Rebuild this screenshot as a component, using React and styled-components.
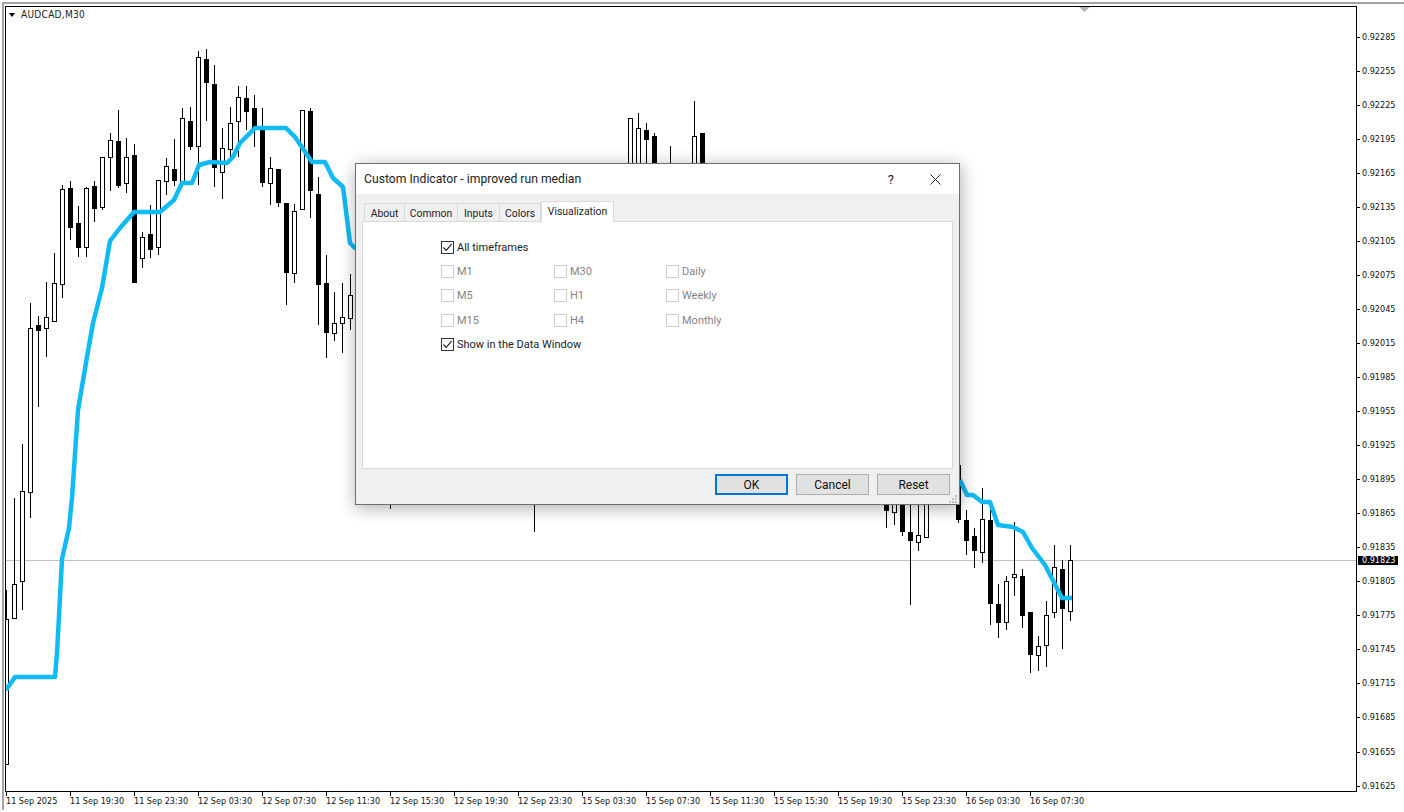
import React from 'react';
import styled, { createGlobalStyle } from 'styled-components';

const AXIS_FONT = '"DejaVu Sans Condensed", "Liberation Sans", sans-serif';
const UI_FONT = 'Roboto, "Noto Sans", "Liberation Sans", sans-serif';

// column, wick top, body top, body bottom, wick bottom, up (white body)
const CANDLES = [
  [6, 590, 619, 764, 764, 1], [14, 498, 584, 618, 618, 1], [22, 444, 491, 581, 610, 1],
  [30, 303, 328, 492, 518, 1], [38, 316, 325, 331, 407, 0], [46, 282, 317, 328, 357, 1],
  [54, 253, 283, 321, 322, 1], [62, 185, 189, 284, 298, 1], [70, 181, 188, 228, 240, 0],
  [78, 206, 223, 248, 257, 0], [86, 187, 188, 247, 257, 1], [94, 181, 186, 209, 222, 0],
  [102, 157, 157, 207, 210, 1], [110, 133, 140, 157, 191, 1], [118, 110, 141, 186, 188, 0],
  [126, 138, 157, 183, 193, 1], [134, 144, 155, 283, 283, 0], [142, 232, 237, 258, 268, 1],
  [150, 205, 234, 250, 258, 0], [158, 180, 180, 247, 255, 1], [166, 158, 166, 181, 195, 1],
  [174, 139, 169, 181, 186, 0], [182, 108, 118, 182, 187, 1], [190, 107, 121, 147, 150, 0],
  [198, 51, 57, 146, 185, 1], [206, 49, 59, 83, 121, 0], [214, 65, 84, 168, 187, 0],
  [222, 128, 148, 172, 199, 1], [230, 107, 123, 149, 158, 1], [238, 86, 97, 121, 157, 1],
  [246, 86, 98, 112, 130, 0], [254, 95, 108, 130, 147, 0], [262, 108, 128, 183, 187, 0],
  [270, 157, 168, 183, 205, 1], [278, 169, 169, 203, 207, 0], [286, 203, 203, 273, 305, 0],
  [294, 204, 211, 273, 283, 1], [302, 110, 110, 209, 209, 1], [310, 108, 111, 191, 218, 0],
  [318, 177, 194, 285, 325, 0], [326, 255, 283, 333, 358, 0], [334, 292, 323, 333, 341, 1],
  [342, 283, 317, 323, 353, 1], [350, 274, 295, 318, 330, 1],
  [390, 480, 490, 495, 509, 1], [534, 480, 490, 495, 532, 1],
  [630, 118, 118, 200, 200, 1], [638, 113, 128, 200, 200, 1], [646, 123, 130, 140, 200, 0],
  [654, 133, 136, 200, 200, 0], [670, 146, 170, 200, 200, 1], [694, 101, 136, 200, 200, 1],
  [702, 133, 133, 200, 200, 0],
  [886, 480, 490, 511, 528, 0], [894, 480, 490, 512, 525, 1], [902, 480, 490, 532, 536, 0],
  [910, 500, 532, 541, 605, 0], [918, 500, 535, 542, 551, 1], [926, 480, 490, 537, 537, 1],
  [958, 465, 465, 520, 523, 0], [966, 510, 520, 541, 555, 0], [974, 528, 536, 551, 568, 0],
  [982, 488, 519, 552, 563, 1], [990, 502, 520, 604, 625, 0], [998, 584, 604, 623, 638, 0],
  [1006, 576, 581, 622, 630, 1], [1014, 522, 574, 577, 596, 1], [1022, 569, 576, 616, 628, 0],
  [1030, 612, 612, 655, 673, 0], [1038, 636, 646, 655, 671, 1], [1046, 601, 615, 645, 667, 1],
  [1054, 545, 567, 612, 618, 1], [1062, 560, 569, 609, 649, 0], [1070, 545, 560, 611, 621, 1],
];

const MEDIAN_LINE = '6,690 15,677 55,677 57,653 62,559 69,528 72,498 78,410 87,357 93,323 102,288 110,241 120,228 134,212 160,212 174,200 182,183 192,183 199,165 210,162 227,163 233,157 240,143 255,128 286,128 295,137 312,162 325,162 333,178 343,187 350,243 356,249';
const MEDIAN_LINE_RIGHT = '960,480 967,495 973,495 982,502 990,502 998,525 1013,527 1023,532 1032,548 1045,565 1062,598 1072,598';

const PRICES = Array.from({ length: 23 }, (_, i) => (0.92285 - i * 0.0003).toFixed(5));

const TIMES = [
  '11 Sep 2025', '11 Sep 19:30', '11 Sep 23:30', '12 Sep 03:30', '12 Sep 07:30', '12 Sep 11:30',
  '12 Sep 15:30', '12 Sep 19:30', '12 Sep 23:30', '15 Sep 03:30', '15 Sep 07:30', '15 Sep 11:30',
  '15 Sep 15:30', '15 Sep 19:30', '15 Sep 23:30', '16 Sep 03:30', '16 Sep 07:30',
];

const TABS = [
  { label: 'About', width: 41 },
  { label: 'Common', width: 53 },
  { label: 'Inputs', width: 42 },
  { label: 'Colors', width: 41 },
  { label: 'Visualization', width: 73, active: true },
];

const TIMEFRAMES = ['M1', 'M30', 'Daily', 'M5', 'H1', 'Weekly', 'M15', 'H4', 'Monthly'];

function Candle ({ candle }) {
  const [x, wickTop, bodyTop, bodyBottom, wickBottom, up] = candle;
  return (
    <g shapeRendering="crispEdges">
      <rect x={x} y={wickTop} width="1" height={wickBottom - wickTop} fill="#000" />
      {up ? (
        <rect x={x - 1.5} y={bodyTop + 0.5} width="4" height={bodyBottom - bodyTop} fill="#fff" stroke="#000" />
      ) : (
        <rect x={x - 2} y={bodyTop} width="5" height={bodyBottom - bodyTop} fill="#000" />
      )}
    </g>
  );
}

function Option ({ label, checked, disabled, wide }) {
  return (
    <OptionRow $wide={wide} $disabled={disabled}>
      <CheckBox $disabled={disabled}>
        {checked && (
          <svg width="11" height="11" viewBox="0 0 11 11">
            <path d="M1.5 5.5 L4.2 8.4 L9.6 2.2" fill="none" stroke="#222" strokeWidth="1.2" />
          </svg>
        )}
      </CheckBox>
      {label}
    </OptionRow>
  );
}

export default function App () {
  return (
    <>
      <GlobalStyle />
      <Workspace>
        <Plot>
          <svg width="1350" height="784" viewBox="6 7 1350 784" style={{ display: 'block' }}>
            <polygon points="1079,7 1090,7 1084.5,12" fill="#b4b4b4" />
            <rect x="6" y="560" width="1350" height="1" fill="#c0c0c0" />
            {CANDLES.map((candle) => <Candle key={candle[0]} candle={candle} />)}
            <polyline points={MEDIAN_LINE} fill="none" stroke="#10baf4" strokeWidth="4.5" strokeLinejoin="round" />
            <polyline points={MEDIAN_LINE_RIGHT} fill="none" stroke="#10baf4" strokeWidth="4.5" strokeLinejoin="round" />
          </svg>
          <SymbolLabel>
            <SymbolArrow />
            AUDCAD,M30
          </SymbolLabel>
        </Plot>
        <PriceAxis>
          {PRICES.map((price) => <PriceLabel key={price}>{price}</PriceLabel>)}
          <PriceTag>0.91823</PriceTag>
        </PriceAxis>
        <TimeAxis>
          {TIMES.map((time) => <TimeLabel key={time}>{time}</TimeLabel>)}
        </TimeAxis>
      </Workspace>

      <Dialog>
        <TitleBar>
          <Title>Custom Indicator - improved run median</Title>
          <HelpGlyph>?</HelpGlyph>
          <CloseGlyph>
            <svg width="11" height="11" viewBox="0 0 11 11">
              <path d="M0.5 0.5 L10.5 10.5 M10.5 0.5 L0.5 10.5" stroke="#222" strokeWidth="1" fill="none" />
            </svg>
          </CloseGlyph>
        </TitleBar>
        <DialogBody>
          <TabRow>
            {TABS.map((tab) => (
              <Tab key={tab.label} $width={tab.width} $active={tab.active}>{tab.label}</Tab>
            ))}
          </TabRow>
          <TabPage>
            <Option label="All timeframes" checked wide />
            {TIMEFRAMES.map((label) => <Option key={label} label={label} disabled />)}
            <Option label="Show in the Data Window" checked wide />
          </TabPage>
          <Footer>
            <Button $primary>OK</Button>
            <Button>Cancel</Button>
            <Button>Reset</Button>
          </Footer>
          <Grip>
            <svg width="9" height="8" viewBox="0 0 9 8">
              <path d="M6 0h2v2H6zM3 3h2v2H3zM6 3h2v2H6zM0 6h2v2H0zM3 6h2v2H3zM6 6h2v2H6z" fill="#c4c4c4" />
            </svg>
          </Grip>
        </DialogBody>
      </Dialog>
    </>
  );
}

const GlobalStyle = createGlobalStyle`
  html, body {
    margin: 0;
    background: #fff;
  }
  body {
    overflow: hidden;
  }
  #root {
    position: relative;
    width: 1404px;
    height: 812px;
  }
`;

const Workspace = styled.div`
  box-sizing: border-box;
  display: grid;
  grid-template-columns: 1352px 1fr;
  grid-template-rows: 786px auto;
  margin: 0 0 0 2px;
  position: relative;
  top: 2px;
  height: 808px;
  padding: 2px 0 0 1px;
  border-top: 2px solid #a3a3a3;
  border-left: 2px solid #a3a3a3;
  font-family: ${AXIS_FONT};
  font-size: 9px;
  color: #111;
`;

const Plot = styled.div`
  position: relative;
  border: 1px solid #000;
  background: #fff;
  overflow: hidden;
`;

const SymbolLabel = styled.div`
  position: absolute;
  left: 3px;
  top: 0;
  display: flex;
  align-items: center;
  gap: 6px;
  height: 15px;
  font-size: 10px;
  letter-spacing: .3px;
  color: #222;
`;

const SymbolArrow = styled.span`
  width: 0;
  height: 0;
  border-left: 3.5px solid transparent;
  border-right: 3.5px solid transparent;
  border-top: 4px solid #000;
`;

const PriceAxis = styled.div`
  position: relative;
  display: flex;
  flex-direction: column;
  padding-top: 13.5px;
`;

const PriceLabel = styled.div`
  flex: 0 0 34.05px;
  display: flex;
  align-items: center;
  padding-left: 5px;
  position: relative;

  &::before {
    content: '';
    position: absolute;
    left: 0;
    top: 50%;
    width: 3px;
    height: 1px;
    background: #000;
  }
`;

const PriceTag = styled.div`
  position: absolute;
  left: 1px;
  top: 550px;
  width: 36px;
  height: 9px;
  padding-left: 4px;
  line-height: 9px;
  background: #000;
  color: #fff;
`;

const TimeAxis = styled.div`
  grid-column: 1 / -1;
  display: flex;
  padding-left: 1px;
`;

const TimeLabel = styled.div`
  flex: 0 0 64px;
  padding-top: 2px;
  position: relative;
  line-height: 14px;
  white-space: nowrap;

  &::before {
    content: '';
    position: absolute;
    left: 0;
    top: 0;
    width: 1px;
    height: 4px;
    background: #000;
  }
`;

const Dialog = styled.div`
  position: absolute;
  left: 355px;
  top: 163px;
  box-sizing: border-box;
  width: 605px;
  height: 342px;
  display: flex;
  flex-direction: column;
  border: 1px solid #6f6f6f;
  background: #f0f0f0;
  box-shadow: 1px 3px 16px rgba(0, 0, 0, .32);
  font-family: ${UI_FONT};
  font-size: 11px;
`;

const TitleBar = styled.div`
  flex: 0 0 30px;
  display: flex;
  align-items: center;
  padding: 0 18px 0 8px;
  background: #fff;
  color: #222;
`;

const Title = styled.div`
  flex: 1 1 auto;
  font-size: 12.2px;
`;

const HelpGlyph = styled.span`
  margin-right: 36px;
  font-size: 13px;
`;

const CloseGlyph = styled.span`
  display: flex;
`;

const DialogBody = styled.div`
  flex: 1 1 auto;
  position: relative;
  display: flex;
  flex-direction: column;
  padding: 7px 6px 0 6px;
`;

const TabRow = styled.div`
  display: flex;
  align-items: flex-end;
  height: 21px;
  padding-left: 2px;
  margin-bottom: -1px;
  position: relative;
  z-index: 1;
`;

const Tab = styled.div`
  box-sizing: border-box;
  width: ${(p) => p.$width}px;
  height: ${(p) => (p.$active ? 21 : 19)}px;
  display: flex;
  align-items: center;
  justify-content: center;
  border: 1px solid #d9d9d9;
  border-bottom: ${(p) => (p.$active ? 'none' : '1px solid #d9d9d9')};
  border-left: ${(p) => (p.$active ? '1px solid #d9d9d9' : 'none')};
  background: ${(p) => (p.$active ? '#fff' : '#f0f0f0')};
  color: #222;
  font-size: 10.4px;
  padding-top: 1px;
  padding-bottom: ${(p) => (p.$active ? 2 : 0)}px;

  &:first-child {
    border-left: 1px solid #d9d9d9;
  }
`;

const TabPage = styled.div`
  box-sizing: border-box;
  height: 248px;
  display: grid;
  grid-template-columns: 113px 112px 1fr;
  grid-auto-rows: 24.4px;
  align-content: start;
  padding: 13px 0 0 78px;
  border: 1px solid #d9d9d9;
  background: #fff;
`;

const OptionRow = styled.label`
  display: flex;
  align-items: center;
  gap: 3px;
  grid-column: ${(p) => (p.$wide ? '1 / -1' : 'auto')};
  color: ${(p) => (p.$disabled ? '#858585' : '#222')};
`;

const CheckBox = styled.span`
  box-sizing: border-box;
  flex: 0 0 13px;
  height: 13px;
  display: flex;
  align-items: center;
  justify-content: center;
  border: 1px solid ${(p) => (p.$disabled ? '#cfcfcf' : '#333')};
  background: #fff;
`;

const Footer = styled.div`
  display: flex;
  justify-content: flex-end;
  gap: 8px;
  padding: 5px 3px 0 0;
`;

const Button = styled.div`
  box-sizing: border-box;
  width: 73px;
  height: 21px;
  display: flex;
  align-items: center;
  justify-content: center;
  border: ${(p) => (p.$primary ? '2px solid #0078d7' : '1px solid #adadad')};
  background: #e1e1e1;
  color: #111;
  font-size: 12px;
`;

const Grip = styled.div`
  position: absolute;
  right: 1px;
  bottom: 1px;
  display: flex;
`;
